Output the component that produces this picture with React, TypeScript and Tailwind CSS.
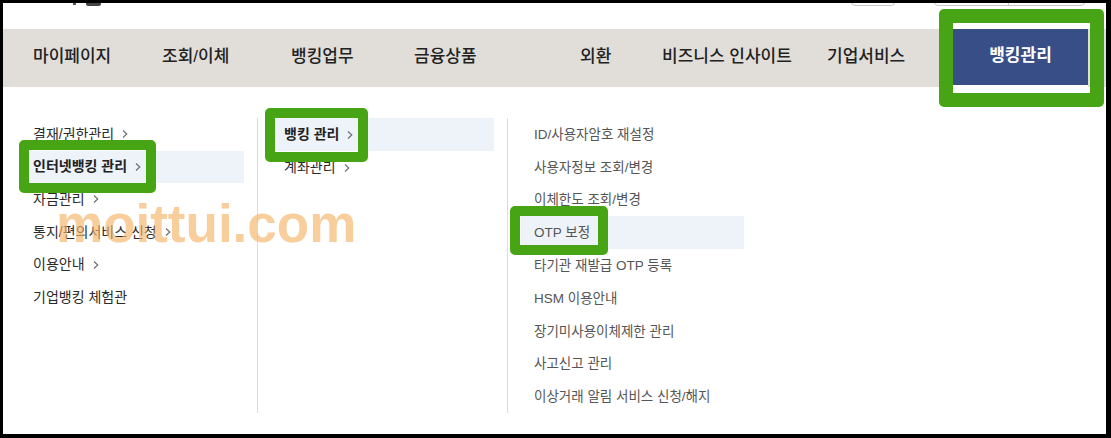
const NAV_ITEMS: { label: string; width: string }[] = [
  { label: "마이페이지", width: "w-[129px]" },
  { label: "조회/이체", width: "w-[129px]" },
  { label: "뱅킹업무", width: "w-[123px]" },
  { label: "금융상품", width: "w-[166px]" },
  { label: "외환", width: "w-[82px]" },
  { label: "비즈니스 인사이트", width: "w-[165px]" },
  { label: "기업서비스", width: "w-[126px]" },
]

const COL1 = [
  { label: "결재/권한관리", arrow: true },
  { label: "인터넷뱅킹 관리", arrow: true, active: true },
  { label: "자금관리", arrow: true },
  { label: "통지/편의서비스 신청", arrow: true },
  { label: "이용안내", arrow: true },
  { label: "기업뱅킹 체험관", arrow: false },
]

const COL2 = [
  { label: "뱅킹 관리", active: true },
  { label: "계좌관리", active: false },
]

const COL3 = [
  "ID/사용자암호 재설정",
  "사용자정보 조회/변경",
  "이체한도 조회/변경",
  "OTP 보정",
  "타기관 재발급 OTP 등록",
  "HSM 이용안내",
  "장기미사용이체제한 관리",
  "사고신고 관리",
  "이상거래 알림 서비스 신청/해지",
]

function Chevron() {
  return (
    <svg width="6" height="10" viewBox="0 0 6 10" className="ml-[8px] shrink-0">
      <polyline points="1,1.5 4.8,5 1,8.5" fill="none" stroke="#6b6b6b" strokeWidth="1.1" />
    </svg>
  )
}

export default function App() {
  return (
    <div className="w-[1111px] h-[438px] bg-black pt-[3px] pl-[3px] pr-[5px] pb-[4px] font-['Liberation_Sans','Noto_Sans_CJK_KR',sans-serif]">
      <div className="relative w-full h-full bg-white overflow-hidden">
        {/* top strip, cut off */}
        <div className="h-[26px] flex items-start overflow-hidden">
          <div className="ml-[70px] w-[3px] h-[2px] bg-[#555]" />
          <div className="ml-[10px] w-[15px] h-[3px] rounded-b-[2px] bg-[#444]" />
          <div className="ml-[750px] -mt-[10px] w-[44px] h-[13px] border border-[#c9c9c9] rounded-b-[4px]" />
          <div className="ml-[39px] -mt-[10px] w-[151px] h-[13px] border border-[#c9c9c9] rounded-b-[4px] flex">
            <div className="w-[74px] border-r border-[#c9c9c9]" />
          </div>
        </div>

        {/* main nav */}
        <div className="h-[58px] bg-[#e1deda] flex pl-[30px]">
          {NAV_ITEMS.map(item => (
            <div key={item.label} className={`${item.width} flex items-center pb-[3px] text-[17px] font-medium text-[#222] whitespace-nowrap`}>
              {item.label}
            </div>
          ))}
          <div className="w-[135px] h-full flex flex-col">
            <div className="h-[56px] bg-[#384e86] flex items-center justify-center pb-[2px] text-[17px] font-bold text-white">
              뱅킹관리
            </div>
            <div className="h-[2px] bg-white" />
          </div>
        </div>

        {/* dropdown */}
        <div className="flex pt-[31px]">
          <div className="w-[254px] h-[295px] pl-[17px] pr-[13px]">
            {COL1.map(item => (
              <div
                key={item.label}
                className={`h-[32.6px] flex items-center px-[13px] text-[14px] whitespace-nowrap ${item.active ? "bg-[#eef2f9] font-bold text-[#222]" : "text-[#2a2a2a]"}`}
              >
                {item.label}
                {item.arrow && <Chevron />}
              </div>
            ))}
          </div>
          <div className="w-[250px] h-[295px] border-l border-[#dddddd] px-[13px]">
            {COL2.map(item => (
              <div
                key={item.label}
                className={`h-[33px] flex items-center px-[13px] text-[14px] whitespace-nowrap ${item.active ? "bg-[#eef2f9] font-bold text-[#222]" : "text-[#2a2a2a]"}`}
              >
                {item.label}
                <Chevron />
              </div>
            ))}
          </div>
          <div className="w-[250px] h-[295px] border-l border-[#dddddd] px-[13px]">
            {COL3.map(label => (
              <div
                key={label}
                className={`h-[32.8px] flex items-center pt-[1px] px-[13px] text-[13.5px] text-[#555] whitespace-nowrap ${label === "OTP 보정" ? "bg-[#eef2f9]" : ""}`}
              >
                {label}
              </div>
            ))}
          </div>
        </div>

        {/* watermark */}
        <div className="absolute left-[53px] top-[194px] text-[53px] leading-none font-bold text-[#f5b469] opacity-65 font-['Liberation_Sans',sans-serif] pointer-events-none">
          moittui.com
        </div>

        {/* annotation frames */}
        <div className="absolute left-[936px] top-[6px] w-[165px] h-[98px] border-[14px] border-[#47a515] rounded-[5px]" />
        <div className="absolute left-[16px] top-[137px] w-[137px] h-[53px] border-[10px] border-[#47a515] rounded-[5px]" />
        <div className="absolute left-[262px] top-[105px] w-[103px] h-[54px] border-[10px] border-[#47a515] rounded-[5px]" />
        <div className="absolute left-[507px] top-[203px] w-[98px] h-[49px] border-[10px] border-[#47a515] rounded-[5px]" />
      </div>
    </div>
  )
}
